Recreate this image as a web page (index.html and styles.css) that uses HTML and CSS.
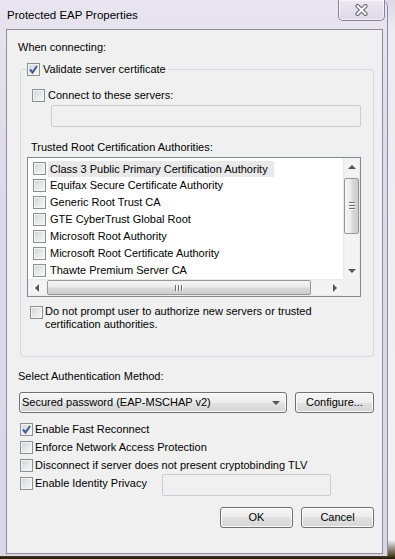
FILE: index.html
```html
<!DOCTYPE html>
<html lang="en">
<head>
    <meta charset="UTF-8">
    <meta name="viewport" content="width=device-width, initial-scale=1.0">
    <title>Protected EAP Properties</title>
    <link rel="stylesheet" href="styles.css">
</head>

<body>
  <div class="window">
    <div class="titlebar">
      <span class="title">Protected EAP Properties</span>
      <div class="close-btn">
        <svg width="13" height="12" viewBox="0 0 13 12">
          <path d="M2.5 2 L10.5 10 M10.5 2 L2.5 10" stroke="#6b6979" stroke-width="4.2" stroke-linecap="round"/>
          <path d="M2.5 2 L10.5 10 M10.5 2 L2.5 10" stroke="#ffffff" stroke-width="2" stroke-linecap="round"/>
        </svg>
      </div>
    </div>

    <div class="client">
      <p class="label when">When connecting:</p>

      <fieldset class="group">
        <legend>
          <label class="check">
            <span class="cb checked"><svg width="11" height="11" viewBox="0 0 11 11"><path d="M2 5.5 L4.5 8.5 L9 2" fill="none" stroke="#3f5a95" stroke-width="2"/></svg></span>
            Validate server certificate
          </label>
        </legend>

        <label class="check servers">
          <span class="cb"></span>
          Connect to these servers:
        </label>
        <div class="textbox servers-box"></div>

        <p class="label trusted">Trusted Root Certification Authorities:</p>

        <div class="listbox">
          <div class="list-main">
            <ul class="items">
              <li class="item"><span class="cb"></span><span class="item-text focus">Class 3 Public Primary Certification Authority</span></li>
              <li class="item"><span class="cb"></span><span class="item-text">Equifax Secure Certificate Authority</span></li>
              <li class="item"><span class="cb"></span><span class="item-text">Generic Root Trust CA</span></li>
              <li class="item"><span class="cb"></span><span class="item-text">GTE CyberTrust Global Root</span></li>
              <li class="item"><span class="cb"></span><span class="item-text">Microsoft Root Authority</span></li>
              <li class="item"><span class="cb"></span><span class="item-text">Microsoft Root Certificate Authority</span></li>
              <li class="item"><span class="cb"></span><span class="item-text">Thawte Premium Server CA</span></li>
            </ul>
            <div class="vscroll">
              <span class="arrow-box"><span class="arrow up"></span></span>
              <div class="thumb vthumb"><span class="grip"></span></div>
              <span class="arrow-box"><span class="arrow down"></span></span>
            </div>
          </div>
          <div class="list-bottom">
            <div class="hscroll">
              <span class="arrow-box"><span class="arrow left"></span></span>
              <div class="thumb hthumb"><span class="grip"></span></div>
              <span class="arrow-box"><span class="arrow right"></span></span>
            </div>
            <div class="corner"></div>
          </div>
        </div>

        <label class="check prompt">
          <span class="cb"></span>
          <span>Do not prompt user to authorize new servers or trusted<br>certification authorities.</span>
        </label>
      </fieldset>

      <p class="label method">Select Authentication Method:</p>
      <div class="method-row">
        <div class="combo">
          <span>Secured password (EAP-MSCHAP v2)</span>
          <span class="arrow down"></span>
        </div>
        <button class="btn configure">Configure...</button>
      </div>

      <div class="options">
        <label class="check opt">
          <span class="cb checked"><svg width="11" height="11" viewBox="0 0 11 11"><path d="M2 5.5 L4.5 8.5 L9 2" fill="none" stroke="#3f5a95" stroke-width="2"/></svg></span>
          Enable Fast Reconnect
        </label>
        <label class="check opt"><span class="cb"></span>Enforce Network Access Protection</label>
        <label class="check opt"><span class="cb"></span>Disconnect if server does not present cryptobinding TLV</label>
        <div class="privacy-row">
          <label class="check opt privacy"><span class="cb"></span>Enable Identity Privacy</label>
          <div class="textbox privacy-box"></div>
        </div>
      </div>

      <div class="actions">
        <button class="btn">OK</button>
        <button class="btn">Cancel</button>
      </div>
    </div>
  </div>
</body>
</html>
```

FILE: styles.css
```css
* {
    margin: 0;
    padding: 0;
    box-sizing: border-box;
}

body {
    width: 395px;
    height: 559px;
    overflow: hidden;
    font-family: "Liberation Sans", Arial, sans-serif;
    font-size: 11px;
    line-height: 15px;
    color: #000;
    background: linear-gradient(to bottom,
        #dcd9e6 0px,
        #ececf0 30px,
        #f2f2f4 540px,
        #4a3a22 556px,
        #1c150d 559px);
}

/* Window frame */
.window {
    width: 388px;
    height: 556px;
    display: flex;
    flex-direction: column;
    padding: 0 4px 2px 6px;
    background: linear-gradient(to bottom, #e8e5f0 0%, #dedae9 30%, #dad6e5 100%);
    border-right: 1px solid #8e8b9d;
    border-top-right-radius: 7px;
}

.titlebar {
    height: 29px;
    display: flex;
    align-items: flex-start;
}

.title {
    padding: 8px 0 0 1px;
    font-size: 11.5px;
}

.close-btn {
    margin-left: auto;
    margin-right: -2px;
    width: 47px;
    height: 21px;
    display: flex;
    align-items: center;
    justify-content: center;
    border: 1px solid #85839a;
    border-top: none;
    border-radius: 0 0 5px 5px;
    background: linear-gradient(to bottom, #ebe8f3, #dcd8e8);
    box-shadow: inset 0 0 0 1px rgba(255, 255, 255, 0.6);
}

/* Client area */
.client {
    flex: 1;
    background: #f0f0f0;
    border: 1px solid #8d8b9c;
    padding: 10px 8px 0 11px;
}

.label {
    line-height: 15px;
}

/* Checkboxes */
.check {
    display: flex;
    align-items: center;
    gap: 3px;
}

.cb {
    width: 13px;
    height: 13px;
    flex: none;
    display: flex;
    align-items: center;
    justify-content: center;
    border: 1px solid #8e8f8f;
    background: linear-gradient(135deg, #cfd2d6 0%, #e6e7e9 50%, #f8f8f8 100%);
    box-shadow: inset 0 0 0 1px #f4f4f4;
}

/* Group box */
.group {
    margin: 7px 0 0 2px;
    padding: 11px 12px 25px 6px;
    border: 1px solid #d5d9dd;
    border-radius: 3px;
    min-width: 0;
}

.group legend {
    padding: 0 2px 0 0;
}

.servers {
    margin-left: 5px;
}

.textbox {
    height: 22px;
    border: 1px solid #cbcdd0;
    border-radius: 2px;
    background: #f0f0f0;
}

.servers-box {
    margin: 2px 0 0 24px;
}

.trusted {
    margin: 13px 0 0 4px;
}

/* List box */
.listbox {
    margin-top: 2px;
    border: 1px solid #828790;
    background: #fff;
}

.list-main {
    display: flex;
    height: 121px;
}

.items {
    flex: 1;
    list-style: none;
    padding: 2px 0 0 5px;
}

.item {
    height: 17px;
    display: flex;
    align-items: center;
    gap: 4px;
}

.item .cb {
    width: 13px;
    height: 13px;
}

.item-text.focus {
    margin-left: -2px;
    padding: 0 6px 0 2px;
    line-height: 16px;
    background: #e9e9e9;
}

/* Scroll bars */
.vscroll {
    width: 17px;
    display: flex;
    flex-direction: column;
    align-items: center;
    background: linear-gradient(to right, #e6e6e6, #f3f3f3 2px, #f3f3f3 15px, #e9e9e9);
}

.arrow-box {
    width: 17px;
    height: 17px;
    flex: none;
    display: flex;
    align-items: center;
    justify-content: center;
}

.vscroll .arrow-box:last-child {
    margin-top: auto;
}

.arrow {
    width: 0;
    height: 0;
    border: 4px solid transparent;
}

.arrow.up {
    border-top: 0;
    border-bottom-color: #555;
}

.arrow.down {
    border-bottom: 0;
    border-top-color: #555;
}

.arrow.left {
    border-left: 0;
    border-right-color: #555;
}

.arrow.right {
    border-right: 0;
    border-left-color: #555;
}

.thumb {
    display: flex;
    align-items: center;
    justify-content: center;
    border: 1px solid #979797;
    border-radius: 2px;
}

.vthumb {
    width: 15px;
    height: 56px;
    margin-top: 3px;
    background: linear-gradient(to right, #f5f5f5, #ebebeb 45%, #dadada 55%, #cdcdcd);
}

.vthumb .grip {
    width: 6px;
    height: 8px;
    background: repeating-linear-gradient(to bottom,
        #6d6d6d 0 1px, #fafafa 1px 2px, transparent 2px 3px);
}

.list-bottom {
    display: flex;
    height: 17px;
}

.hscroll {
    flex: 1;
    display: flex;
    align-items: center;
    background: linear-gradient(to bottom, #e6e6e6, #f3f3f3 2px, #f3f3f3 15px, #e9e9e9);
}

.hthumb {
    width: 264px;
    height: 15px;
    margin-left: 2px;
    background: linear-gradient(to bottom, #f5f5f5, #ebebeb 45%, #dadada 55%, #cdcdcd);
}

.hthumb .grip {
    width: 8px;
    height: 6px;
    background: repeating-linear-gradient(to right,
        #6d6d6d 0 1px, #fafafa 1px 2px, transparent 2px 3px);
}

.hscroll .arrow-box:last-child {
    margin-left: auto;
}

.corner {
    width: 17px;
    background: #f0f0f0;
}

.prompt {
    margin: 8px 0 0 3px;
    align-items: flex-start;
    gap: 2px;
    line-height: 13px;
}

.prompt .cb {
    margin-top: 1px;
}

/* Authentication method */
.method {
    margin-top: 12px;
}

.method-row {
    display: flex;
    justify-content: space-between;
    margin-top: 8px;
}

.combo,
.btn {
    height: 21px;
    border: 1px solid #707070;
    border-radius: 3px;
    background: linear-gradient(to bottom, #f6f6f6 0%, #ececec 50%, #e1e1e1 50%, #d6d6d6 100%);
    box-shadow: inset 0 0 0 1px #fbfbfb;
    font: inherit;
    color: #000;
}

.combo {
    width: 268px;
    margin-left: 1px;
    display: flex;
    align-items: center;
    justify-content: space-between;
    padding: 0 6px 0 2px;
}

.btn {
    width: 73px;
}

.configure {
    width: 79px;
}

.options {
    margin-top: 7px;
}

.opt {
    height: 18px;
    margin-left: 2px;
    gap: 2px;
}

.privacy-row {
    display: flex;
    align-items: flex-start;
}

.privacy {
    width: 142px;
}

.privacy-box {
    width: 169px;
}

.actions {
    display: flex;
    justify-content: flex-end;
    gap: 8px;
    margin-top: 11px;
}
```
